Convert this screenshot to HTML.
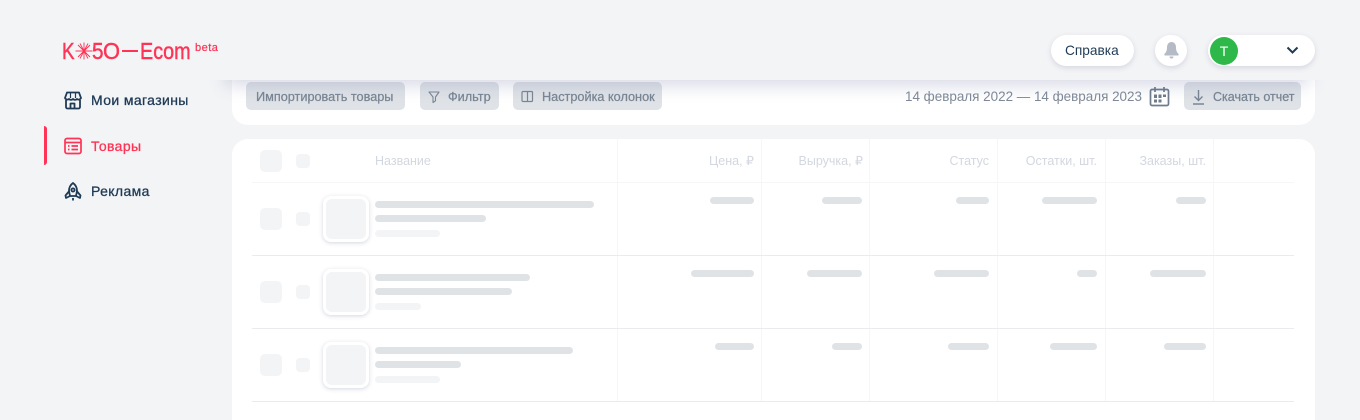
<!DOCTYPE html>
<html lang="ru"><head><meta charset="utf-8"><title>Товары</title>
<style>
html,body{margin:0;padding:0;width:1360px;height:420px;overflow:hidden;background:#f3f4f6;font-family:"Liberation Sans",sans-serif}
body{position:relative}
.a,.t{position:absolute}
.t{white-space:nowrap;line-height:16px}
.card{position:absolute;left:232px;width:1083px;background:#fff;border-radius:16px}
.btn{position:absolute;top:82px;height:28px;background:#dfe3e7;border-radius:5px}
.bt{color:#7a8694;font-size:12.7px;top:89px;-webkit-text-stroke:.25px #7a8694}
.h{color:#d3d7df;font-size:12.5px;top:153px}
.v{position:absolute;top:139px;width:1px;height:262px;background:#f5f6f8}
.l{position:absolute;left:252px;width:1042px;height:1px;background:#e9ebee}
.b{position:absolute;height:7px;border-radius:4px;background:#e0e3e6}
.c{background:#f3f4f6}
.ck{position:absolute;left:260px;width:22px;height:22px;border-radius:5px;background:#f3f4f6}
.sk{position:absolute;left:296px;width:14px;height:14px;border-radius:4px;background:#f3f4f6}
.th{position:absolute;left:323px;width:46px;height:46px;border-radius:8px;background:#fff;box-shadow:0 1px 4px rgba(60,70,110,.22)}
.th i{position:absolute;left:3px;top:3px;width:40px;height:40px;border-radius:6px;background:#f3f4f6}
.nav{left:91px;font-size:14px;color:#1f3a55;letter-spacing:.38px;-webkit-text-stroke:.3px currentColor}
.pill{position:absolute;background:#fff;border-radius:16px;box-shadow:0 2px 6px rgba(60,70,110,.16)}
.lg{color:#ff3355;font-size:23px;line-height:26px;top:38px;transform-origin:0 50%;-webkit-text-stroke:.45px #ff3355}
</style></head><body>

<div class="card" style="top:60px;height:65px"></div>
<div class="card" style="top:139px;height:281px;border-radius:16px 16px 0 0"></div>

<div class="btn" style="left:246px;width:159px"></div>
<div class="t bt" style="left:256px">Импортировать товары</div>
<div class="btn" style="left:420px;width:79px"></div>
<svg class="a" style="left:427px;top:90px" width="14" height="14" viewBox="0 0 14 14" fill="none" stroke="#7a8694" stroke-width="1.100"><path d="M2 2h10L8.500 7v3.800L6 12.500V7z" stroke-linejoin="round"/></svg>
<div class="t bt" style="left:448px">Фильтр</div>
<div class="btn" style="left:513px;width:149px"></div>
<svg class="a" style="left:521px;top:90px" width="13" height="13" viewBox="0 0 13 13" fill="none" stroke="#7a8694" stroke-width="1.200"><rect x="1" y="1.500" width="10.500" height="10" rx="1"/><path d="M6.500 1.500v10"/></svg>
<div class="t bt" style="left:542px">Настройка колонок</div>

<div class="t" style="left:905px;top:89px;font-size:13.45px;color:#7f8a98">14 февраля 2022 — 14 февраля 2023</div>
<svg class="a" style="left:1149px;top:86px" width="21" height="21" viewBox="0 0 21 21" fill="none" stroke="#6f7c8b" stroke-width="1.700"><rect x="1.500" y="3.500" width="18" height="16" rx="1.500"/><path d="M6 1v5M15 1v5"/><path d="M5 8.500h3v3.500H5zM9.500 8.500h3v3.500h-3zM14 8.500h3v2.500h-3zM5 13.500h3v3H5zM9.500 13.500h3v3h-3z" fill="#6f7c8b" stroke="none"/></svg>
<div class="btn" style="left:1184px;width:117px"></div>
<svg class="a" style="left:1191px;top:89px" width="15" height="16" viewBox="0 0 15 16" fill="none" stroke="#7a8694" stroke-width="1.400"><path d="M7.500 1v10M3.500 7.500l4 4 4-4M2 15h11"/></svg>
<div class="t bt" style="left:1213px;font-size:12.500px">Скачать отчет</div>

<!-- header shadow + header -->
<div class="a" style="left:226px;top:40px;width:1082px;height:40px;box-shadow:0 4px 18px rgba(90,95,150,.27)"></div>
<div class="a" style="left:0;top:0;width:1360px;height:80px;background:#f3f4f6"></div>

<!-- logo -->
<div class="t lg" style="left:62px;transform:scaleX(.82)">K</div>
<svg class="a" style="left:75px;top:42px" width="18" height="18" viewBox="0 0 18 18" stroke="#ff3355" stroke-width=".9"><path d="M9 .5v17M.5 9h17M3 3l12 12M15 3L3 15M5 1.500l8 15M13 1.500l-8 15"/></svg>
<div class="t lg" style="left:92px;transform:scaleX(.9)">5</div>
<div class="t lg" style="left:103px;transform:scaleX(.95)">O</div>
<div class="a" style="left:122px;top:50px;width:16px;height:1.500px;background:#ff3355"></div>
<div class="t lg" style="left:140px;transform:scaleX(.86)">Ecom</div>
<div class="t" style="left:195px;top:40px;font-size:11px;color:#ff3355;letter-spacing:.5px;-webkit-text-stroke:.2px #ff3355">beta</div>

<!-- nav -->
<svg class="a" style="left:64px;top:91px" width="18" height="19" viewBox="0 0 18 19" fill="none" stroke="#1f3a55" stroke-width="1.800" stroke-linejoin="round"><path d="M3 1.500h12l2 5.500a2.500 2.500 0 0 1-4 1 2.800 2.800 0 0 1-4 0 2.800 2.800 0 0 1-4 0 2.500 2.500 0 0 1-4-1z"/><path d="M2 9v7a1.500 1.500 0 0 0 1.500 1.500h11A1.500 1.500 0 0 0 16 16V9"/><path d="M6.500 17.500v-5h4v5"/><path d="M6.500 2v5M11.500 2v5" stroke-width="1.200"/></svg>
<div class="t nav" style="top:92px">Мои магазины</div>

<div class="a" style="left:44px;top:126px;width:3px;height:39px;background:#ff3355;border-radius:0 3px 3px 0"></div>
<svg class="a" style="left:64px;top:137px" width="18" height="18" viewBox="0 0 18 18" fill="none" stroke="#ff3355" stroke-width="1.700"><rect x="1" y="1.500" width="16" height="15" rx="2"/><path d="M1 5.500h16"/><path d="M4 9h1.500M7.500 9H14M4 12.500h1.500M7.500 12.500H14"/></svg>
<div class="t nav" style="top:138px;color:#ff3355">Товары</div>

<svg class="a" style="left:64px;top:182px" width="18" height="19" viewBox="0 0 18 19" fill="none" stroke="#1f3a55" stroke-width="1.800" stroke-linejoin="round"><path d="M9 1c2.800 2 4 5 4 8l-1 5H6L5 9c0-3 1.200-6 4-8z"/><circle cx="9" cy="8" r="1.600"/><path d="M5.300 9L1.500 13.500 2 16l4-2M12.700 9l3.800 4.500L16 16l-4-2M9 16v2.500"/></svg>
<div class="t nav" style="top:183px">Реклама</div>

<!-- top right -->
<div class="pill" style="left:1051px;top:35px;width:83px;height:31px"></div>
<div class="t" style="left:1065px;top:43px;font-size:13.700px;color:#1f3a55">Справка</div>
<div class="pill" style="left:1155px;top:35px;width:32px;height:31px"></div>
<svg class="a" style="left:1163px;top:41px" width="17" height="19" viewBox="0 0 17 19" fill="#b4bac6"><path d="M8.500 1C5.500 1 4 3.500 4 6.500c0 3-1 5-2.500 6.500-.5.700-.2 1.500.7 1.500h12.600c.9 0 1.200-.8.700-1.500C14 11.500 13 9.500 13 6.500 13 3.500 11.500 1 8.500 1z"/><path d="M6.500 15.500h4a2 2 0 0 1-4 0z"/></svg>
<div class="pill" style="left:1208px;top:35px;width:107px;height:31px"></div>
<div class="a" style="left:1210px;top:37px;width:28px;height:28px;border-radius:50%;background:#2fb84a"></div>
<div class="t" style="left:1210px;top:43px;width:28px;text-align:center;font-size:14px;color:#fff">Т</div>
<svg class="a" style="left:1286px;top:46px" width="13" height="9" viewBox="0 0 13 9" fill="none" stroke="#1f3a55" stroke-width="2"><path d="M1.500 1.500l5 5 5-5"/></svg>

<!-- table -->
<div class="v" style="left:617px"></div><div class="v" style="left:761px"></div><div class="v" style="left:869px"></div><div class="v" style="left:997px"></div><div class="v" style="left:1105px"></div><div class="v" style="left:1213px"></div>
<div class="l" style="top:182px;background:#f5f6f8"></div><div class="l" style="top:255px"></div><div class="l" style="top:328px"></div><div class="l" style="top:401px"></div>

<div class="ck" style="top:150px"></div><div class="sk" style="top:154px"></div>
<div class="t h" style="left:375px">Название</div>
<div class="t h" style="right:606px">Цена, ₽</div>
<div class="t h" style="right:497px">Выручка, ₽</div>
<div class="t h" style="right:371px">Статус</div>
<div class="t h" style="right:263px">Остатки, шт.</div>
<div class="t h" style="right:154px">Заказы, шт.</div>

<!-- row 1 -->
<div class="ck" style="top:208px"></div><div class="sk" style="top:212px"></div>
<div class="th" style="top:196px"><i></i></div>
<div class="b" style="left:375px;top:201px;width:219px"></div>
<div class="b" style="left:375px;top:215px;width:111px"></div>
<div class="b c" style="left:375px;top:230px;width:65px"></div>
<div class="b" style="left:710px;top:197px;width:44px"></div>
<div class="b" style="left:822px;top:197px;width:40px"></div>
<div class="b" style="left:956px;top:197px;width:33px"></div>
<div class="b" style="left:1042px;top:197px;width:55px"></div>
<div class="b" style="left:1176px;top:197px;width:30px"></div>

<!-- row 2 -->
<div class="ck" style="top:281px"></div><div class="sk" style="top:285px"></div>
<div class="th" style="top:269px"><i></i></div>
<div class="b" style="left:375px;top:274px;width:155px"></div>
<div class="b" style="left:375px;top:288px;width:137px"></div>
<div class="b c" style="left:375px;top:303px;width:46px"></div>
<div class="b" style="left:691px;top:270px;width:63px"></div>
<div class="b" style="left:807px;top:270px;width:55px"></div>
<div class="b" style="left:934px;top:270px;width:55px"></div>
<div class="b" style="left:1077px;top:270px;width:20px"></div>
<div class="b" style="left:1150px;top:270px;width:56px"></div>

<!-- row 3 -->
<div class="ck" style="top:354px"></div><div class="sk" style="top:358px"></div>
<div class="th" style="top:342px"><i></i></div>
<div class="b" style="left:375px;top:347px;width:198px"></div>
<div class="b" style="left:375px;top:361px;width:86px"></div>
<div class="b c" style="left:375px;top:376px;width:65px"></div>
<div class="b" style="left:715px;top:343px;width:39px"></div>
<div class="b" style="left:832px;top:343px;width:30px"></div>
<div class="b" style="left:948px;top:343px;width:41px"></div>
<div class="b" style="left:1050px;top:343px;width:47px"></div>
<div class="b" style="left:1164px;top:343px;width:42px"></div>

</body></html>
